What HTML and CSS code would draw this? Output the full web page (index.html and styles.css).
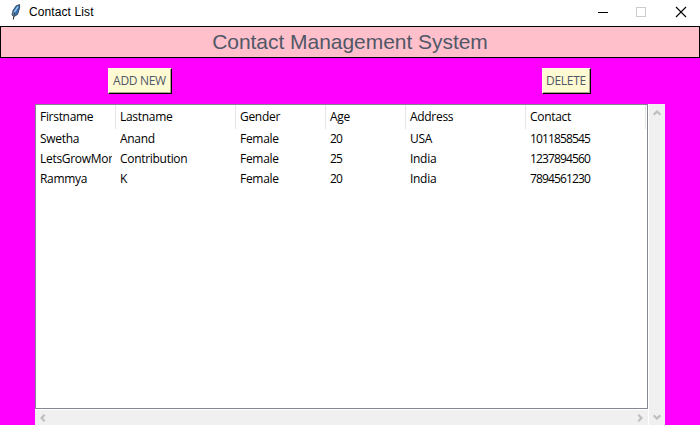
FILE: index.html
```html
<!DOCTYPE html>
<html lang="en">
<head>
<meta charset="utf-8">
<title>Contact List</title>
<link rel="stylesheet" href="styles.css">
</head>
<body>
<div class="window">
  <header class="titlebar">
    <svg class="feather" width="10" height="16" viewBox="0 0 10 16"><path d="M8.500.5 5 2 2 6.500 1 11l2 1.500 3.500-2L8 6l.7-3z" fill="#3975b5" stroke="#25364b" stroke-width=".8"/><path d="M7 2.500 3.500 8 2.500 13" fill="none" stroke="#a9d2f5" stroke-width="1.3"/><path d="M3.500 8.500 2.300 15.500" fill="none" stroke="#222" stroke-width="1"/></svg>
    <span class="window-title">Contact List</span>
    <svg class="controls" width="110" height="24" viewBox="0 0 110 24" fill="none" shape-rendering="crispEdges"><path d="M8 12.500h10" stroke="#000"/><path d="M46.500 7.500h9v9h-9z" stroke="#ccc"/><path d="m86 7 10 10m0-10L86 17" stroke="#000" stroke-width="1.1" shape-rendering="auto"/></svg>
  </header>
  <h1 class="heading"><span>Contact Management System</span></h1>
  <div class="toolbar"><button class="btn add"><span>ADD NEW</span></button><button class="btn delete"><span>DELETE</span></button></div>
  <main class="pane">
    <div class="tree">
      <div class="row head"><div><span>Firstname</span></div><div><span>Lastname</span></div><div><span>Gender</span></div><div><span>Age</span></div><div><span>Address</span></div><div><span>Contact</span></div></div>
      <div class="row"><div><span>Swetha</span></div><div><span>Anand</span></div><div><span>Female</span></div><div><span class="num">20</span></div><div><span>USA</span></div><div><span class="num">1011858545</span></div></div>
      <div class="row"><div><span>LetsGrowMore</span></div><div><span>Contribution</span></div><div><span>Female</span></div><div><span class="num">25</span></div><div><span>India</span></div><div><span class="num">1237894560</span></div></div>
      <div class="row"><div><span>Rammya</span></div><div><span>K</span></div><div><span>Female</span></div><div><span class="num">20</span></div><div><span>India</span></div><div><span class="num">7894561230</span></div></div>
    </div>
    <div class="vscroll">
      <svg width="8" height="6" viewBox="0 0 8 6"><path d="m.7 4.700 3.300-3.200 3.300 3.200"/></svg>
      <svg width="8" height="6" viewBox="0 0 8 6"><path d="m.7 1.300 3.300 3.200 3.300-3.200"/></svg>
    </div>
    <div class="hscroll">
      <svg width="6" height="8" viewBox="0 0 6 8"><path d="M4.700.7 1.500 4l3.200 3.300"/></svg>
      <svg width="6" height="8" viewBox="0 0 6 8"><path d="M1.300.7 4.500 4 1.300 7.300"/></svg>
    </div>
  </main>
</div>
</body>
</html>
```
FILE: styles.css
```css
* { box-sizing: border-box; }
body { margin: 0; overflow: hidden; }
.window { width: 700px; height: 425px; background: #f0f; font-family: "Open Sans", sans-serif; font-size: 12px; color: #000; }
.titlebar { height: 26px; background: #fff; display: flex; align-items: flex-start; }
.feather { margin: 4px 0 0 11px; }
.window-title { font: 12px/24px "Liberation Sans", Arial, sans-serif; margin-left: 8px; letter-spacing: .1px; }
.controls { margin-left: auto; }
.heading { margin: 0; height: 32px; border: 1px solid #000; background: #ffc0cb; color: #4f5867; text-align: center; font: 21px/30px "Liberation Sans", Arial, sans-serif; letter-spacing: -.04px; }
.toolbar { height: 46px; padding: 10px 109px 0 108px; display: flex; justify-content: space-between; align-items: flex-start; }
.btn { height: 26px; padding: 0 1px 1px 0; border: 1px solid; border-color: #fffde8 #000 #000 #fffde8; box-shadow: inset -1px -1px #a9a58c; background: #fffad2; color: #4f5867; font: 12px/22px "Open Sans", sans-serif; }
.btn span { display: inline-block; white-space: nowrap; letter-spacing: -.3px; }
.add { width: 64px; }
.delete { width: 49px; }
.pane { margin: 0 35px; height: 321px; display: grid; grid-template: 305px 16px / 613px 17px; background: #fff; }
.tree { border: 1px solid #828790; background: #fff; overflow: hidden; }
.row { display: grid; grid-template-columns: 80px 120px 90px 80px 120px 120px; height: 20px; line-height: 20px; }
.row > div { margin: 0 4px; overflow: hidden; white-space: nowrap; }
.row span { letter-spacing: -.3px; }
.row .num { letter-spacing: -.86px; }
.head { height: 24px; line-height: 24px; }
.head > div { margin: 0; padding-left: 4px; border-right: 1px solid #e5e5e5; }
.vscroll { grid-row: 1 / 3; grid-column: 2; margin-left: 1px; background: #f0f0f0; display: flex; flex-direction: column; justify-content: space-between; align-items: center; padding: 6px 0 5px; }
.hscroll { margin-top: 1px; background: #f0f0f0; display: flex; justify-content: space-between; align-items: center; padding: 0 5px; }
.vscroll path, .hscroll path { fill: none; stroke: #bfbfbf; stroke-width: 2.2; }
```
